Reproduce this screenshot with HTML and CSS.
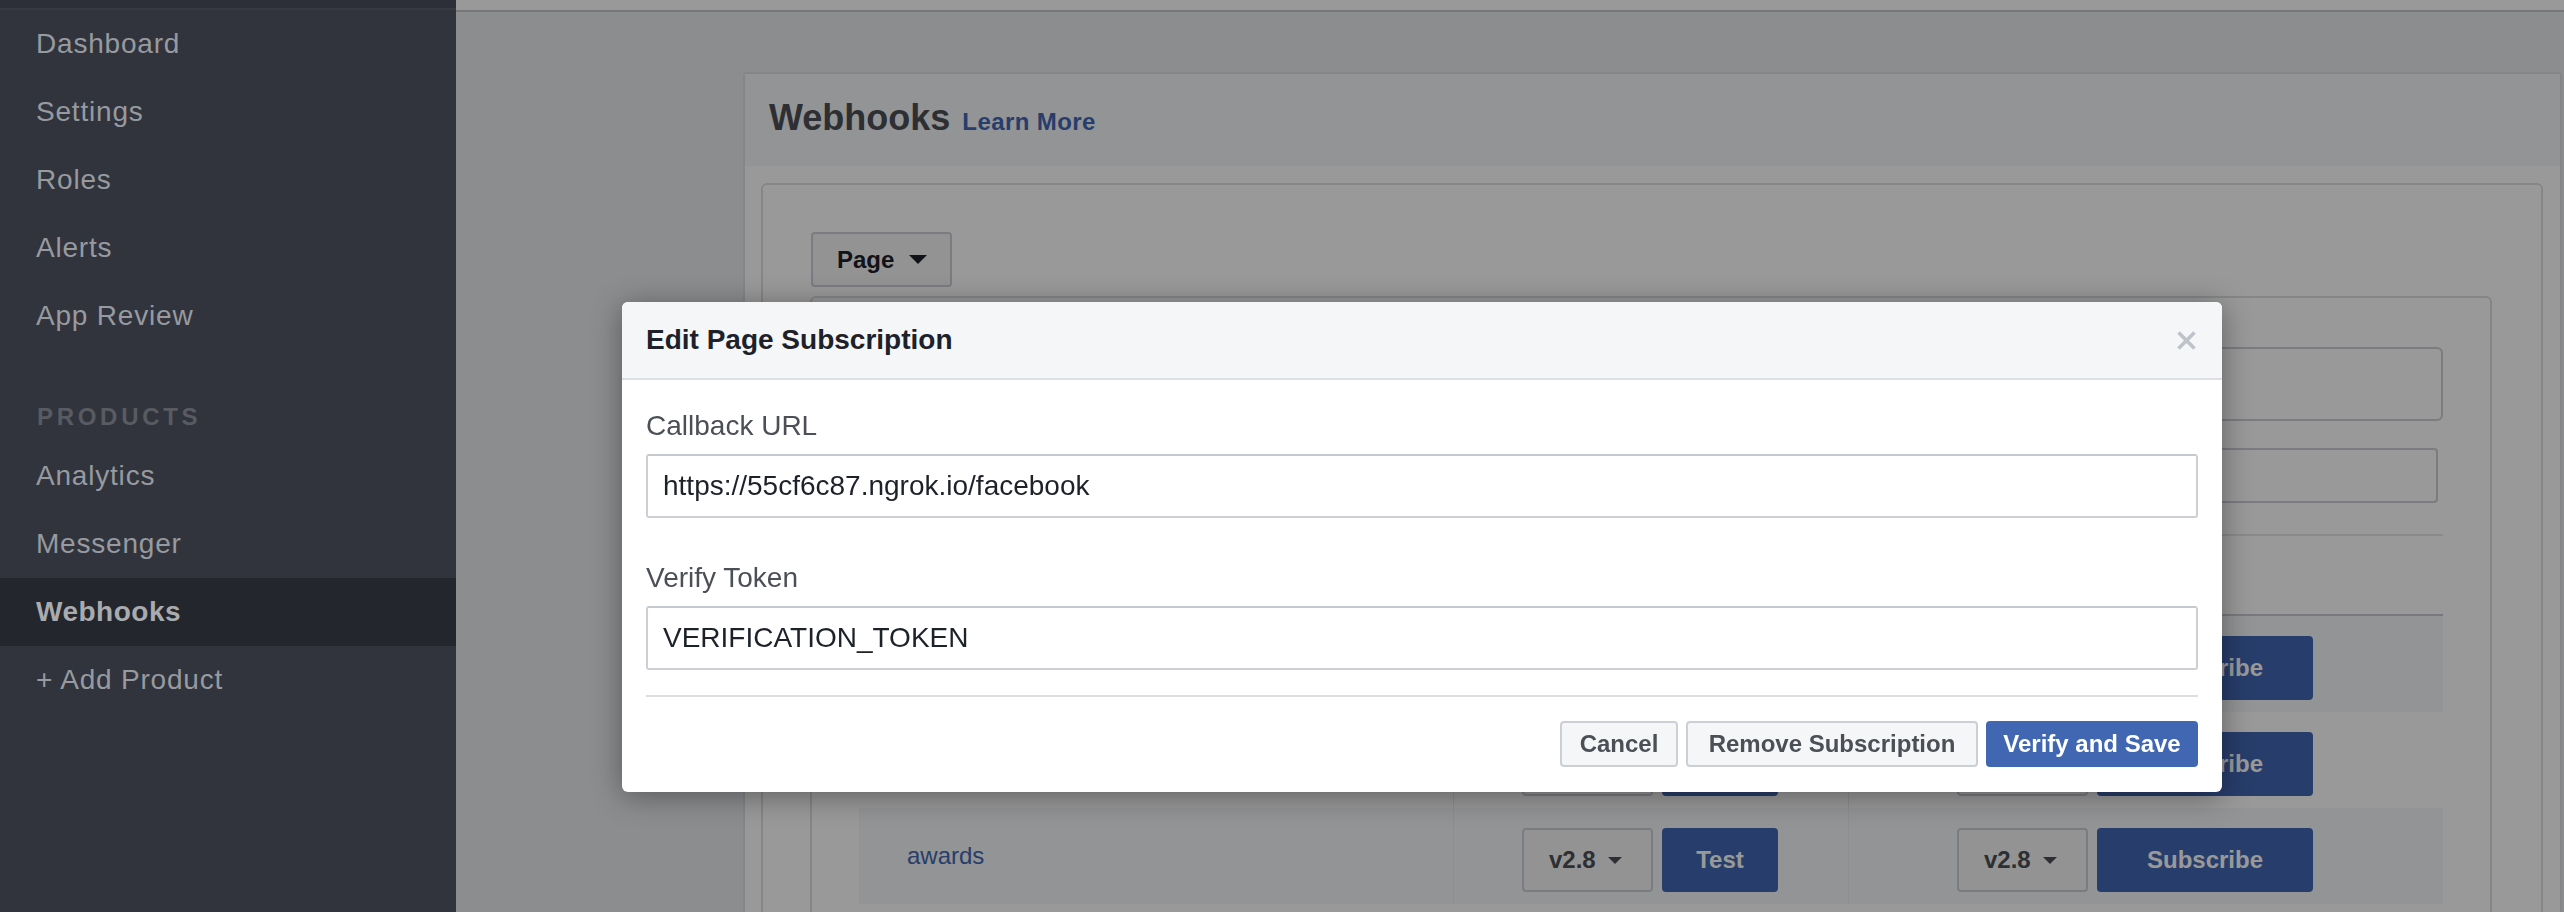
FILE: index.html
```html
<!DOCTYPE html>
<html lang="en">
<head>
<meta charset="utf-8">
<title>Webhooks</title>
<link rel="stylesheet" href="styles.css">
</head>
<body>
<div class="app">
  <aside class="sidebar">
    <div class="sidebar-top"></div>
    <nav class="nav">
      <a class="nav-item">Dashboard</a>
      <a class="nav-item">Settings</a>
      <a class="nav-item">Roles</a>
      <a class="nav-item">Alerts</a>
      <a class="nav-item">App Review</a>
    </nav>
    <div class="nav-heading">PRODUCTS</div>
    <nav class="nav">
      <a class="nav-item">Analytics</a>
      <a class="nav-item">Messenger</a>
      <a class="nav-item nav-item-active">Webhooks</a>
      <a class="nav-item">+ Add Product</a>
    </nav>
  </aside>

  <main class="main">
    <div class="topbar"></div>
    <section class="panel">
      <header class="panel-header">
        <h1 class="panel-title">Webhooks</h1>
        <a class="learn-more">Learn More</a>
      </header>
      <div class="panel-body">
        <div class="card">
          <button class="select-btn">Page <span class="caret caret-lg"></span></button>
          <div class="sub-box">
            <div class="field-lg"></div>
            <div class="field-sm"></div>
            <div class="table">
              <div class="thead">
                <div class="cell cell-name"></div>
                <div class="cell cell-mid"></div>
                <div class="cell cell-end"></div>
              </div>
              <div class="row row-alt">
                <div class="cell cell-name"></div>
                <div class="cell cell-mid">
                  <button class="ver-btn" aria-label="v2.8"></button>
                  <button class="blue-btn btn-test" aria-label="Test"></button>
                </div>
                <div class="cell cell-end">
                  <button class="ver-btn" aria-label="v2.8"></button>
                  <button class="blue-btn btn-sub">Subscribe</button>
                </div>
              </div>
              <div class="row">
                <div class="cell cell-name"></div>
                <div class="cell cell-mid">
                  <button class="ver-btn" aria-label="v2.8"></button>
                  <button class="blue-btn btn-test" aria-label="Test"></button>
                </div>
                <div class="cell cell-end">
                  <button class="ver-btn" aria-label="v2.8"></button>
                  <button class="blue-btn btn-sub">Subscribe</button>
                </div>
              </div>
              <div class="row row-alt">
                <div class="cell cell-name"><span class="field-name">awards</span></div>
                <div class="cell cell-mid">
                  <button class="ver-btn">v2.8 <span class="caret"></span></button>
                  <button class="blue-btn btn-test">Test</button>
                </div>
                <div class="cell cell-end">
                  <button class="ver-btn">v2.8 <span class="caret"></span></button>
                  <button class="blue-btn btn-sub">Subscribe</button>
                </div>
              </div>
            </div>
          </div>
        </div>
      </div>
    </section>
  </main>
</div>

<div class="overlay"></div>

<div class="modal">
  <div class="modal-header">
    <h2 class="modal-title">Edit Page Subscription</h2>
    <svg class="modal-close" width="21" height="21" viewBox="0 0 21 21" aria-label="Close">
      <path d="M2.5 2.5 L18.5 18.5 M18.5 2.5 L2.5 18.5" stroke="#bec2c9" stroke-width="3.6" stroke-linecap="butt" fill="none"/>
    </svg>
  </div>
  <div class="modal-body">
    <label class="field-label">Callback URL</label>
    <div class="text-input">https://55cf6c87.ngrok.io/facebook</div>
    <label class="field-label field-label-2">Verify Token</label>
    <div class="text-input">VERIFICATION_TOKEN</div>
    <div class="modal-sep"></div>
    <div class="modal-footer">
      <button class="btn btn-cancel">Cancel</button>
      <button class="btn btn-remove">Remove Subscription</button>
      <button class="btn btn-primary">Verify and Save</button>
    </div>
  </div>
</div>
</body>
</html>
```

FILE: styles.css
```css
* { box-sizing: border-box; }

html, body {
  margin: 0;
  padding: 0;
  width: 2564px;
  height: 912px;
  overflow: hidden;
  font-family: "Liberation Sans", Arial, Helvetica, sans-serif;
}

button {
  font-family: inherit;
  margin: 0;
  cursor: pointer;
}

.app {
  display: flex;
  height: 912px;
}

/* ---------- Sidebar ---------- */
.sidebar {
  width: 456px;
  flex: 0 0 456px;
  background: #31343d;
  height: 912px;
}

.sidebar-top {
  height: 10px;
  background: #2c2f37;
  border-bottom: 2px solid #363942;
}

.nav {
  display: flex;
  flex-direction: column;
}

.nav-item {
  height: 68px;
  display: flex;
  align-items: center;
  padding-left: 36px;
  font-size: 28px;
  letter-spacing: 0.8px;
  color: #979a9f;
}

.nav-item-active {
  background: #23262d;
  font-weight: bold;
  letter-spacing: 0.5px;
  color: #a9abae;
}

.nav-heading {
  margin-top: 50px;
  margin-bottom: 8px;
  height: 34px;
  line-height: 34px;
  padding-left: 37px;
  font-size: 24px;
  font-weight: bold;
  letter-spacing: 3.7px;
  color: #585b62;
}

/* ---------- Main ---------- */
.main {
  flex: 1;
  background: #e9ebee;
  height: 912px;
  overflow: hidden;
}

.topbar {
  height: 12px;
  background: #ffffff;
  border-bottom: 2px solid #c6c7ca;
}

.panel {
  margin: 60px 2px 0 287px;
  background: #ffffff;
  border: 2px solid #dddfe2;
  border-bottom: none;
  border-radius: 4px 4px 0 0;
  height: 860px;
}

.panel-header {
  height: 92px;
  background: #f6f7f9;
  padding: 22px 0 0 24px;
  display: flex;
  align-items: baseline;
}

.panel-title {
  margin: 0;
  font-size: 36px;
  line-height: 44px;
  font-weight: bold;
  color: #4b4f56;
}

.learn-more {
  margin-left: 12px;
  font-size: 24px;
  letter-spacing: 0.4px;
  font-weight: bold;
  color: #4267b2;
}

.panel-body {
  padding: 17px 17px 0 16px;
}

.card {
  border: 2px solid #dddfe2;
  border-radius: 6px;
  padding: 47px 49px 0 47px;
  height: 760px;
}

.select-btn {
  display: flex;
  align-items: center;
  width: 141px;
  height: 55px;
  margin-left: 1px;
  padding: 0 0 0 24px;
  background: #f5f6f7;
  border: 2px solid #ccd0d5;
  border-radius: 4px;
  font-size: 24px;
  font-weight: bold;
  color: #1d2129;
}

.caret {
  display: inline-block;
  width: 0;
  height: 0;
  margin-left: 12px;
  border-left: 7.5px solid transparent;
  border-right: 7.5px solid transparent;
  border-top: 7px solid #4b4f56;
}

.caret-lg {
  margin-left: 15px;
  border-left-width: 9px;
  border-right-width: 9px;
  border-top: 9px solid #1d2129;
}

.sub-box {
  margin-top: 9px;
  border: 2px solid #dddfe2;
  border-radius: 6px;
  padding: 49px 47px 0 47px;
  height: 700px;
}

.field-lg {
  height: 74px;
  border: 2px solid #ccd0d5;
  border-radius: 6px;
}

.field-sm {
  margin-top: 27px;
  margin-right: 5px;
  height: 55px;
  border: 2px solid #ccd0d5;
  border-radius: 4px;
}

.table {
  margin-top: 31px;
  border-top: 2px solid #e5e6e9;
}

.thead,
.row {
  display: grid;
  grid-template-columns: 594px 396px 594px;
}

.thead {
  height: 80px;
  border-bottom: 2px solid #c8cbd0;
}

.row {
  height: 96px;
}

.row-alt {
  background: #f6f7f9;
}

.cell {
  display: flex;
  align-items: center;
  gap: 9px;
  padding-top: 8px;
}

.thead .cell {
  padding-top: 0;
}

.cell-name {
  padding-left: 48px;
}

.cell-mid {
  border-left: 1px solid #e9ebee;
  border-right: 1px solid #e9ebee;
  padding-left: 68px;
}

.cell-end {
  padding-left: 108px;
}

.field-name {
  font-size: 24px;
  color: #4267b2;
  position: relative;
  top: -4px;
}

.ver-btn {
  display: flex;
  align-items: center;
  width: 131px;
  height: 64px;
  padding: 0 0 0 25px;
  background: #f5f6f7;
  border: 2px solid #ccd0d5;
  border-radius: 4px;
  font-size: 24px;
  font-weight: bold;
  color: #4b4f56;
}

.blue-btn {
  height: 64px;
  padding: 0;
  background: #4267b2;
  border: 2px solid #4267b2;
  border-radius: 4px;
  font-size: 24px;
  font-weight: bold;
  color: #ffffff;
}

.btn-test { width: 116px; }
.btn-sub { width: 216px; }

/* ---------- Overlay & modal ---------- */
.overlay {
  position: fixed;
  left: 456px;
  top: 0;
  right: 0;
  bottom: 0;
  background: rgba(0, 0, 0, 0.4);
  z-index: 10;
}

.modal {
  position: absolute;
  left: 622px;
  top: 302px;
  width: 1600px;
  background: #ffffff;
  border-radius: 6px;
  box-shadow: 0 4px 30px rgba(0, 0, 0, 0.38);
  overflow: hidden;
  z-index: 20;
}

.modal-header {
  height: 78px;
  background: #f5f6f7;
  border-bottom: 2px solid #dddfe2;
  display: flex;
  align-items: center;
  justify-content: space-between;
  padding: 0 25px 0 24px;
}

.modal-title {
  margin: 0;
  font-size: 28px;
  font-weight: bold;
  color: #1d2129;
}

.modal-close {
  display: block;
}

.modal-body {
  padding: 28px 24px 0 24px;
}

.field-label {
  display: block;
  font-size: 28px;
  line-height: 36px;
  color: #4b4f56;
  margin-bottom: 10px;
}

.field-label-2 {
  margin-top: 42px;
}

.text-input {
  height: 64px;
  border: 2px solid #ccd0d5;
  border-top-color: #c5c9d0;
  border-radius: 3px;
  padding: 0 15px;
  display: flex;
  align-items: center;
  font-size: 28px;
  color: #1d2129;
}

.modal-sep {
  margin-top: 25px;
  height: 2px;
  background: #dddfe2;
}

.modal-footer {
  display: flex;
  justify-content: flex-end;
  gap: 8px;
  padding: 24px 0 25px;
}

.btn {
  height: 46px;
  padding: 0;
  border: 2px solid #ccd0d5;
  border-radius: 4px;
  background: #f5f6f7;
  font-size: 24px;
  font-weight: bold;
  color: #4b4f56;
}

.btn-cancel { width: 118px; }
.btn-remove { width: 292px; }

.btn-primary {
  width: 212px;
  background: #4267b2;
  border-color: #4267b2;
  color: #ffffff;
}
```
